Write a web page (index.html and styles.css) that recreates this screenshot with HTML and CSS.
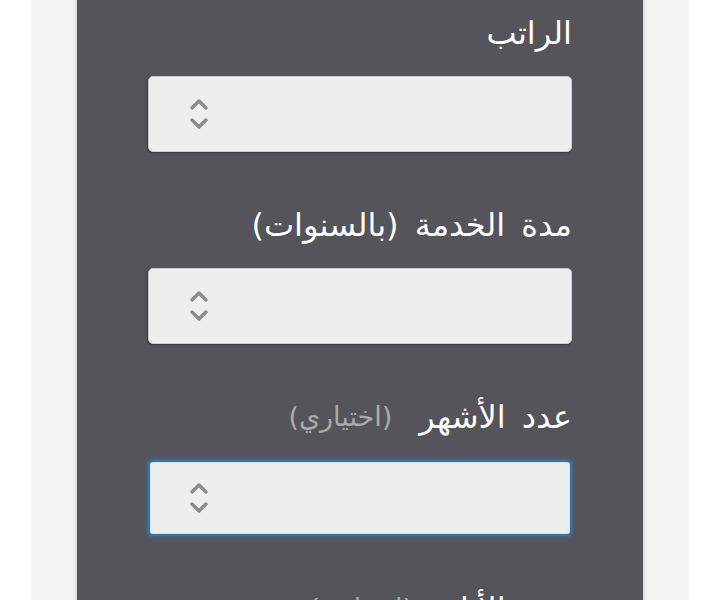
FILE: index.html
```html
<!DOCTYPE html>
<html lang="ar" dir="rtl">
<head>
<meta charset="utf-8">
<title>حاسبة</title>
<link rel="stylesheet" href="styles.css">
</head>
<body>
<div class="page">
  <div class="panel">
    <div class="field">
      <label class="label"><span class="label-main">الراتب</span></label>
      <div class="input">
        <svg class="spin" viewBox="0 0 22 34" width="22" height="34"><path d="M4 11 L11 4 L18 11" /><path d="M4 23 L11 30 L18 23" /></svg>
      </div>
    </div>
    <div class="field">
      <label class="label"><span class="label-main">مدة الخدمة (بالسنوات)</span></label>
      <div class="input">
        <svg class="spin" viewBox="0 0 22 34" width="22" height="34"><path d="M4 11 L11 4 L18 11" /><path d="M4 23 L11 30 L18 23" /></svg>
      </div>
    </div>
    <div class="field">
      <label class="label"><span class="label-main">عدد الأشهر</span><span class="label-opt">(اختياري)</span></label>
      <div class="input focused">
        <svg class="spin" viewBox="0 0 22 34" width="22" height="34"><path d="M4 11 L11 4 L18 11" /><path d="M4 23 L11 30 L18 23" /></svg>
      </div>
    </div>
    <div class="field">
      <label class="label"><span class="label-main">عدد الأيام</span><span class="label-opt">(اختياري)</span></label>
      <div class="input">
        <svg class="spin" viewBox="0 0 22 34" width="22" height="34"><path d="M4 11 L11 4 L18 11" /><path d="M4 23 L11 30 L18 23" /></svg>
      </div>
    </div>
  </div>
</div>
</body>
</html>
```
FILE: styles.css
```css
html, body {
  margin: 0;
  padding: 0;
  background: #ffffff;
  height: 600px;
  overflow: hidden;
}
body {
  font-family: "DejaVu Sans", "Noto Sans", sans-serif;
}
.page {
  margin: 0 31px;
  background: #f4f4f4;
  height: 600px;
  display: flex;
  justify-content: center;
}
.panel {
  width: 424px;
  background: #55545a;
  padding: 13px 71px 0 71px;
  border-left: 2px solid #e2e2e2;
  border-right: 2px solid #e2e2e2;
  box-shadow: 0 0 0 1px #ededed;
}
.field {
  margin-bottom: 53px;
}
.label {
  display: flex;
  align-items: center;
  gap: 27px;
  height: 40px;
  line-height: 40px;
  margin-bottom: 23px;
  color: #ffffff;
}
.label-main {
  font-size: 32px;
  word-spacing: 6px;
}
.label-opt {
  font-size: 27px;
  color: #aaaaaa;
}
.input {
  box-sizing: border-box;
  height: 76px;
  background: #eeeeee;
  border: 1px solid #cfcfcf;
  border-radius: 5px;
  box-shadow: -1px 1px 2px rgba(0, 0, 0, 0.35);
  display: flex;
  align-items: center;
  justify-content: flex-end;
  padding-left: 39px;
}
.input.focused {
  border: 2px solid #41709f;
  box-shadow: inset 0 0 0 1px #d4e6f6, 0 0 0 1px #3d6591, 0 0 3px 2px rgba(65, 112, 159, 0.5);
  padding-left: 38px;
}
.spin path {
  fill: none;
  stroke: #8c8c8c;
  stroke-width: 3.5;
  stroke-linecap: round;
  stroke-linejoin: round;
}
```
